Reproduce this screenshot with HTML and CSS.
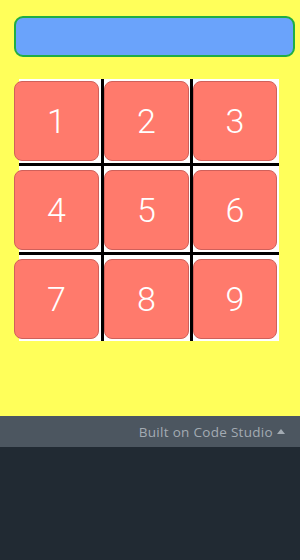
FILE: index.html
```html
<!DOCTYPE html>
<html lang="en">
<head>
    <meta charset="UTF-8">
    <meta name="viewport" content="width=device-width, initial-scale=1.0">
    <title>Keypad</title>
    <link rel="stylesheet" href="styles.css">
</head>
<body>

    <div id="screen">
        <div class="display" id="display"></div>

        <div class="pad">
            <div class="cell"><button class="key">1</button></div>
            <div class="cell"><button class="key">2</button></div>
            <div class="cell"><button class="key">3</button></div>
            <div class="cell"><button class="key">4</button></div>
            <div class="cell"><button class="key">5</button></div>
            <div class="cell"><button class="key">6</button></div>
            <div class="cell"><button class="key">7</button></div>
            <div class="cell"><button class="key">8</button></div>
            <div class="cell"><button class="key">9</button></div>
        </div>
    </div>

    <div class="footer">
        <span>Built on Code Studio</span>
        <span class="arrow"></span>
    </div>

</body>
</html>
```

FILE: styles.css
```css
* {
    margin: 0;
    padding: 0;
    box-sizing: border-box;
}

body, html {
    width: 100%;
    height: 100%;
    background: #212a33;
    font-family: 'Roboto', 'Liberation Sans', sans-serif;
    overflow: hidden;
}

#screen {
    height: 416px;
    background: #ffff5a;
    padding-top: 16px;
}

.display {
    margin-left: 14px;
    width: 281px;
    height: 41px;
    background: #6aa3fb;
    border: 2px solid #1fae45;
    border-radius: 9px;
}

.pad {
    margin-top: 22px;
    margin-left: 19px;
    width: 260px;
    display: grid;
    grid-template-columns: 82px 86px 86px;
    grid-template-rows: 84px 86px 86px;
    gap: 3px;
    background: #000;
}

.cell {
    background: #fff;
    display: flex;
    align-items: flex-end;
    padding-bottom: 2px;
}

.key {
    width: 85px;
    height: 80px;
    background: #ff7a6c;
    border: 1px solid #d0605a;
    border-radius: 8px;
    color: #fff;
    font-family: 'Roboto', 'Liberation Sans', sans-serif;
    font-weight: 300;
    font-size: 34px;
    display: flex;
    justify-content: center;
    align-items: center;
    cursor: pointer;
}

.cell:nth-child(3n+1) .key {
    margin-left: -5px;
}

.cell:nth-child(3n+3) .key {
    width: 84px;
}

.footer {
    height: 31px;
    background: #4c5660;
    color: #a3abb3;
    font-family: 'Open Sans', 'Lato', sans-serif;
    font-size: 13.5px;
    letter-spacing: 0.3px;
    display: flex;
    justify-content: flex-end;
    align-items: center;
    padding-right: 15px;
    gap: 4px;
}

.arrow {
    width: 0;
    height: 0;
    border-left: 4.5px solid transparent;
    border-right: 4.5px solid transparent;
    border-bottom: 5px solid #a3abb3;
    margin-bottom: 1px;
}
```
